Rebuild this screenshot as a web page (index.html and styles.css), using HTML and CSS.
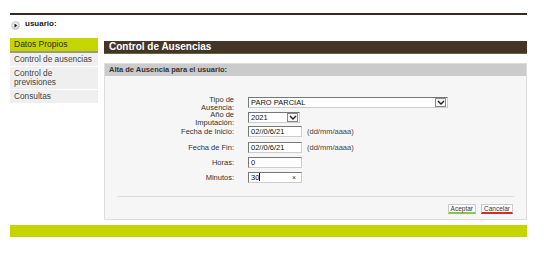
FILE: index.html
```html
<!DOCTYPE html>
<html>
<head>
    <title>Control de Ausencias</title>
    <link rel="stylesheet" href="styles.css">
</head>
<body>
    <div class="page">
        <div class="top-line"></div>
        <div class="user">
            <span class="user-icon">
                <svg width="9" height="9" viewBox="0 0 9 9"><polygon points="3.5,2.5 6.2,4.5 3.5,6.5" fill="#111"/></svg>
            </span>
            <span class="user-name">usuario:</span>
        </div>

        <div class="layout">
            <ul class="menu">
                <li class="menu-head">Datos Propios</li>
                <li>Control de ausencias</li>
                <li>Control de<br>previsiones</li>
                <li>Consultas</li>
            </ul>

            <div class="main">
                <div class="title-bar">Control de Ausencias</div>

                <div class="panel">
                    <div class="panel-head">Alta de Ausencia para el usuario:</div>
                    <div class="form">
                        <label class="two">Tipo de<br>Ausencia:</label>
                        <div class="field">
                            <span class="select wide">PARO PARCIAL
                                <span class="arrow"><svg width="8" height="5" viewBox="0 0 8 5"><polyline points="1,1 4,4 7,1" fill="none" stroke="#222" stroke-width="1.4"/></svg></span>
                            </span>
                        </div>

                        <label class="two">Año de<br>Imputación:</label>
                        <div class="field">
                            <span class="select short">2021
                                <span class="arrow"><svg width="8" height="5" viewBox="0 0 8 5"><polyline points="1,1 4,4 7,1" fill="none" stroke="#222" stroke-width="1.4"/></svg></span>
                            </span>
                        </div>

                        <label>Fecha de Inicio:</label>
                        <div class="field"><span class="input">02//0/6/21</span><span class="hint">(dd/mm/aaaa)</span></div>

                        <label>Fecha de Fin:</label>
                        <div class="field"><span class="input">02//0/6/21</span><span class="hint">(dd/mm/aaaa)</span></div>

                        <label>Horas:</label>
                        <div class="field"><span class="input">0</span></div>

                        <label>Minutos:</label>
                        <div class="field"><span class="input">30<span class="caret"></span><span class="clear">×</span></span></div>
                    </div>
                    <div class="divider"></div>
                    <div class="actions">
                        <span class="btn ok">Aceptar</span>
                        <span class="btn cancel">Cancelar</span>
                    </div>
                </div>
            </div>
        </div>

        <div class="footer-bar"></div>
    </div>
</body>
</html>
```

FILE: styles.css
```css
body { margin: 0; background: #fff; font-family: "Liberation Sans", Arial, sans-serif; color: #333; }
.page { width: 517px; padding: 13px 0 0 10px; }
.top-line { height: 2px; background: #3a2a24; }
.user { display: flex; align-items: center; gap: 5px; height: 15px; padding: 3px 0 0 1px; }
.user-icon { width: 9px; height: 9px; border-radius: 50%; background: radial-gradient(circle at 40% 35%, #fff, #bbb); border: 1px solid #ccc; box-sizing: border-box; display: flex; }
.user-icon svg { margin: -1px; }
.user-name { font-size: 8px; font-weight: bold; color: #222; margin-top: -5px; }

.layout { display: flex; gap: 6px; margin-top: 5px; }
.menu { list-style: none; margin: 0; padding: 0; width: 88px; font-size: 8.3px; }
.menu li { background: #efefef; padding: 2px 4px; line-height: 9px; border-bottom: 1px solid #fff; color: #444; }
.menu .menu-head { background: #c5d500; color: #2a2a10; font-size: 8.5px; padding: 2px 4px; border-bottom: 2px solid #9a9a80; }

.main { flex: 1; padding-top: 3px; }
.title-bar { background: #453528; color: #fff; font-weight: bold; font-size: 10px; height: 10px; line-height: 10px; padding: 1px 0 1px 5px; border-bottom: 1px solid #5b6a3a; }
.panel { margin-top: 9px; background: #f6f6f6; border: 1px solid #ddd; height: 157px; box-sizing: border-box; }
.panel-head { background: #cbcbcb; height: 12px; line-height: 12px; font-size: 7.5px; font-weight: bold; color: #333; padding-left: 4px; }

.form { display: grid; grid-template-columns: 129px 1fr; grid-template-rows: 15px 14px 16px 15px 15px 15px; column-gap: 14px; padding-top: 21px; font-size: 7.5px; }
.form label { text-align: right; line-height: 11px; color: #333; }
.form label.two { line-height: 7.5px; margin-top: -1px; }
.field { display: flex; align-items: flex-start; gap: 5px; }
.select, .input { position: relative; height: 11px; box-sizing: border-box; border: 1px solid #999; border-color: #777 #ccc #ccc #777; background: #fff; line-height: 9px; padding-left: 2px; color: #111; }
.select.wide { width: 200px; }
.select.short { width: 52px; }
.input { width: 54px; }
.arrow { position: absolute; right: 1px; top: 0; width: 11px; height: 9px; border: 1px solid #888; box-sizing: border-box; background: #f4f4f4; display: flex; align-items: center; justify-content: center; }
.hint { line-height: 11px; color: #444; }
.caret { display: inline-block; width: 1px; height: 8px; background: #000; vertical-align: -1px; }
.clear { position: absolute; right: 5px; top: 0; font-size: 7px; color: #333; }

.divider { height: 1px; background: #ddd; margin: 9px 12px 0; }
.actions { display: flex; justify-content: flex-end; gap: 5px; padding: 7px 13px 0 0; }
.btn { font-size: 6.5px; line-height: 7px; padding: 0 2px; background: #fff; border: 1px solid #ccc; color: #333; }
.btn.ok { border-bottom: 2px solid #8cc640; }
.btn.cancel { border-bottom: 2px solid #d62b2b; }

.footer-bar { height: 12px; background: #c5d500; margin-top: 5px; }
```
